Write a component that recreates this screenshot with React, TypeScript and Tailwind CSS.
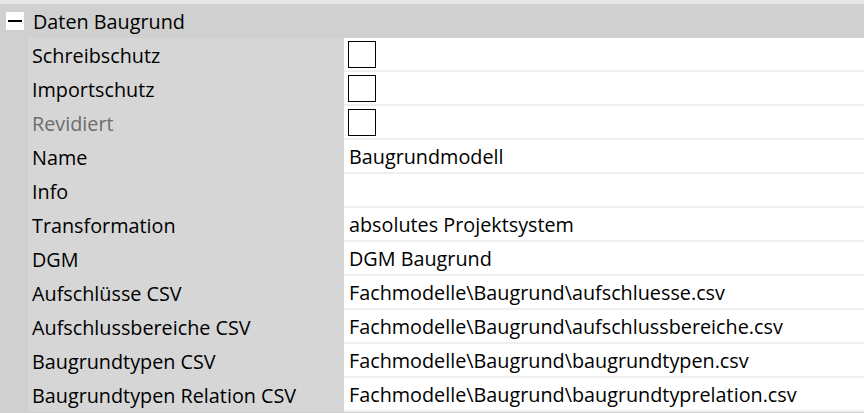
import React from 'react'

type Row = { label: string; value?: string; checkbox?: boolean; disabled?: boolean }

const rows: Row[] = [
  { label: 'Schreibschutz', checkbox: true },
  { label: 'Importschutz', checkbox: true },
  { label: 'Revidiert', checkbox: true, disabled: true },
  { label: 'Name', value: 'Baugrundmodell' },
  { label: 'Info', value: '' },
  { label: 'Transformation', value: 'absolutes Projektsystem' },
  { label: 'DGM', value: 'DGM Baugrund' },
  { label: 'Aufschlüsse CSV', value: 'Fachmodelle\\Baugrund\\aufschluesse.csv' },
  { label: 'Aufschlussbereiche CSV', value: 'Fachmodelle\\Baugrund\\aufschlussbereiche.csv' },
  { label: 'Baugrundtypen CSV', value: 'Fachmodelle\\Baugrund\\baugrundtypen.csv' },
  { label: 'Baugrundtypen Relation CSV', value: 'Fachmodelle\\Baugrund\\baugrundtyprelation.csv' },
]

export default function App() {
  return (
    <div
      className="w-[864px] h-[413px] overflow-hidden bg-[#d0d0d0] text-[19.8px] text-black"
      style={{ fontFamily: '"Open Sans", "Noto Sans", sans-serif' }}
    >
      <div className="h-[4px] bg-[#e6e6e6]" />

      {/* Category header */}
      <div className="h-[34px] bg-[#d0d0d0] flex items-center">
        <div className="ml-[6px] w-[18px] h-[18px] bg-white flex items-center justify-center">
          <div className="w-[14px] h-[2px] bg-black" />
        </div>
        <span className="ml-[9px] pt-[2px] leading-none">Daten Baugrund</span>
      </div>

      {/* Properties */}
      <div className="flex bg-[#d0d0d0]">
        <div className="w-[28px] shrink-0" />
        <div className="flex-1">
          {rows.map((row, i) => (
            <div key={i} className="flex h-[34px]">
              <div
                className={`w-[316px] shrink-0 bg-[#d6d6d6] flex items-center pl-[4px] pt-[2px] ${
                  row.disabled ? 'text-[#6d6d6d]' : 'text-black'
                }`}
              >
                {row.label}
              </div>
              <div className="flex-1 bg-white border-b-2 border-[#efefef] flex items-center pl-[5px]">
                {row.checkbox ? (
                  <div className="ml-[-1px] w-[28px] h-[27px] border-[1.5px] border-black bg-white" />
                ) : (
                  <span className="whitespace-nowrap pt-[2px]">{row.value}</span>
                )}
              </div>
            </div>
          ))}
        </div>
      </div>
    </div>
  )
}
